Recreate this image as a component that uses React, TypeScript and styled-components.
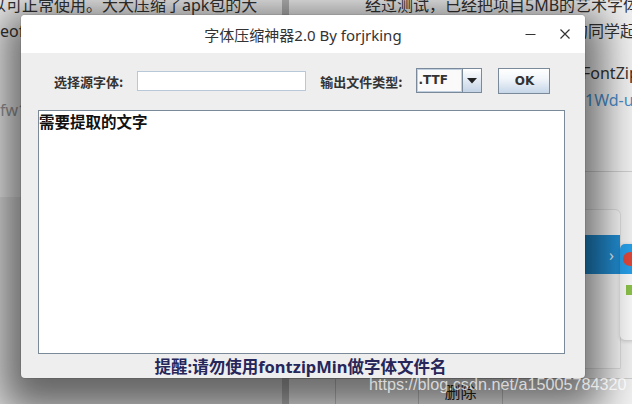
import React from "react";
import styled, { createGlobalStyle } from "styled-components";

const Global = createGlobalStyle`
  html, body { margin: 0; padding: 0; }
  body { width: 632px; height: 404px; overflow: hidden; background: #ececec; }
  * { box-sizing: border-box; }
`;

const CJK = `"Noto Sans", "Noto Sans CJK SC", sans-serif`;

const Page = styled.div`
  position: relative;
  width: 632px;
  height: 404px;
  overflow: hidden;
  background: #efefef;
  font-family: ${CJK};
`;

const Columns = styled.div`
  display: grid;
  grid-template-columns: 282px 7px 1fr;
  height: 404px;
`;

const LeftCol = styled.div`
  display: flex;
  flex-direction: column;
  background: #f1f1f1;
`;

const PageLine = styled.div<{ $pad?: number; $h?: number; $lh?: number; $color?: string }>`
  height: ${(p) => p.$h ?? 26}px;
  line-height: ${(p) => p.$lh ?? p.$h ?? 26}px;
  padding-left: ${(p) => p.$pad ?? 0}px;
  font-size: 16px;
  color: ${(p) => p.$color ?? "#333"};
  white-space: nowrap;
  overflow: hidden;
`;

const TopLine = styled(PageLine)<{ $indent?: number }>`
  margin-top: -8px;
  text-indent: ${(p) => p.$indent ?? 0}px;
`;

const LowerSection = styled.div`
  margin-top: auto;
  height: 207px;
  background: #e2e2e2;
`;

const Divider = styled.div`
  background: #b8b8b8;
`;

const RightCol = styled.div`
  display: flex;
  flex-direction: column;
  background: #f3f3f3;
`;

const Rule = styled.div`
  margin-top: 57px;
  height: 1px;
  background: #d0d0d0;
`;

const Card = styled.div`
  position: relative;
  margin: 37px 0 0 130px;
  width: 202px;
  height: 160px;
  background: #fafafa;
  border-radius: 0 6px 0 0;
  border: 1px solid #e0e0e0;
`;

const BlueBar = styled.div`
  margin-top: 25px;
  height: 39px;
  background: linear-gradient(90deg, #1d7ab8, #2290d6);
  display: flex;
  align-items: center;
  justify-content: flex-end;
  padding-right: 6px;
  color: #e8f2fb;
  font-size: 16px;
`;

const Popup = styled.div`
  position: absolute;
  left: 100%;
  top: 34px;
  width: 40px;
  height: 96px;
  background: #fbfbfb;
  border-radius: 5px 0 0 5px;
  box-shadow: 0 1px 4px rgba(0, 0, 0, 0.2);
  overflow: hidden;
`;

const PopupHead = styled.div`
  height: 30px;
  background: #27a0ea;
  display: flex;
  align-items: center;
  padding-left: 3px;
`;

const RedDot = styled.div`
  width: 14px;
  height: 14px;
  border-radius: 50%;
  background: #e0483a;
`;

const GreenMark = styled.div`
  margin: 11px 0 0 6px;
  width: 10px;
  height: 10px;
  background: #8bc34a;
`;

const TableRow = styled.div`
  margin-top: auto;
  height: 26px;
  display: flex;
  border-top: 1px solid #cfcfcf;
`;

const Cell = styled.div<{ $w: number }>`
  width: ${(p) => p.$w}px;
  border-right: 1px solid #c8c8c8;
  font-size: 16px;
  line-height: 26px;
  color: #222;
  text-align: center;
`;

const Dialog = styled.div`
  position: absolute;
  left: 21px;
  top: 15px;
  width: 564px;
  height: 363px;
  background: #eeeeee;
  border-radius: 4px;
  display: flex;
  flex-direction: column;
  box-shadow: 0 14px 40px 18px rgba(0, 0, 0, 0.56), 0 0 0 1px rgba(0, 0, 0, 0.08);
  overflow: hidden;
`;

const TitleBar = styled.div`
  height: 40px;
  background: #ffffff;
  display: grid;
  grid-template-columns: 1fr auto 1fr;
  align-items: center;
`;

const Title = styled.div`
  grid-column: 2;
  font-size: 15px;
  color: #333;
  white-space: nowrap;
`;

const WinButtons = styled.div`
  grid-column: 3;
  justify-self: end;
  display: flex;
  align-items: center;
  gap: 24px;
  padding-right: 15px;
`;

const Body = styled.div`
  flex: 1;
  display: flex;
  flex-direction: column;
  padding: 15px 20px 0 17px;
`;

const FormRow = styled.div`
  display: flex;
  align-items: center;
  height: 26px;
  padding-left: 16px;
  gap: 14px;
`;

const Label = styled.span`
  font-family: "Noto Sans CJK SC", sans-serif;
  font-size: 13px;
  font-weight: 700;
  color: #333;
  white-space: nowrap;
`;

const TextInput = styled.div`
  width: 169px;
  height: 20px;
  background: #fff;
  border: 1px solid #b8c8d8;
`;

const Combo = styled.div`
  width: 66px;
  height: 25px;
  display: flex;
  border: 1px solid #7a8a9a;
  margin-top: -1px;
`;

const ComboText = styled.div`
  flex: 1;
  background: #fafafa;
  border: 1px solid #c0d0e0;
  font-family: "DejaVu Sans", sans-serif;
  font-weight: 700;
  font-size: 12px;
  line-height: 21px;
  color: #333;
`;

const ComboArrow = styled.div`
  width: 19px;
  border-left: 1px solid #7a8a9a;
  background: linear-gradient(#ffffff, #c4d4e6);
  display: flex;
  align-items: center;
  justify-content: center;
`;

const OkButton = styled.div`
  margin-left: 2px;
  width: 52px;
  height: 26px;
  border: 1px solid #7a8a9a;
  background: linear-gradient(#ffffff 0%, #f2f6fa 40%, #c6d6e8 100%);
  display: flex;
  align-items: center;
  justify-content: center;
  font-family: "DejaVu Sans", sans-serif;
  font-weight: 700;
  font-size: 12px;
  color: #333;
`;

const TextArea = styled.div`
  margin-top: 16px;
  height: 244px;
  background: #fff;
  border: 1px solid #7a8a99;
  padding: 1px 0 0 0;
  font-family: "Noto Sans CJK SC", sans-serif;
  font-size: 15.5px;
  font-weight: 700;
  line-height: 18px;
  color: #111;
`;

const Hint = styled.div`
  flex: 1;
  display: flex;
  align-items: center;
  justify-content: center;
  font-size: 16.5px;
  font-weight: 700;
  color: #26265a;
  padding-right: 2px;
  white-space: nowrap;
`;

const Watermark = styled.div`
  position: absolute;
  left: 369px;
  top: 375px;
  font-family: "Liberation Sans", Arial, sans-serif;
  font-size: 16.2px;
  color: rgba(255, 255, 255, 0.72);
  white-space: nowrap;
`;

function MinIcon() {
  return (
    <svg width="11" height="10" viewBox="0 0 11 10">
      <path d="M0.5 5.5 H10.5" stroke="#333" strokeWidth="1.2" />
    </svg>
  );
}

function CloseIcon() {
  return (
    <svg width="10" height="10" viewBox="0 0 10 10">
      <path d="M0.5 0.5 L9.5 9.5 M9.5 0.5 L0.5 9.5" stroke="#333" strokeWidth="1.2" />
    </svg>
  );
}

function Arrow() {
  return (
    <svg width="10" height="6" viewBox="0 0 10 6">
      <path d="M0 0 H10 L5 5.5 Z" fill="#222" />
    </svg>
  );
}

export default function App() {
  return (
    <Page>
      <Global />
      <Columns>
        <LeftCol>
          <TopLine $indent={-10}>以可正常使用。大大压缩了apk包的大</TopLine>
          <PageLine $h={26}>eof</PageLine>
          <PageLine $h={90} $lh={132} $color="#9a9a9a">
            fw1
          </PageLine>
          <LowerSection />
        </LeftCol>
        <Divider />
        <RightCol>
          <TopLine $pad={76}>经过测试，已经把项目5MB的艺术字体</TopLine>
          <PageLine $pad={235} $h={26}>有需要的同学起</PageLine>
          <PageLine $pad={277} $h={42} $lh={58}>或FontZip</PageLine>
          <PageLine $pad={296} $h={28} $color="#4a8fce">1Wd-u</PageLine>
          <Rule />
          <Card>
            <BlueBar>›</BlueBar>
            <Popup>
              <PopupHead>
                <RedDot />
              </PopupHead>
              <GreenMark />
            </Popup>
          </Card>
          <TableRow>
            <Cell $w={47} />
            <Cell $w={83} />
            <Cell $w={84}>删除</Cell>
          </TableRow>
        </RightCol>
      </Columns>

      <Dialog>
        <TitleBar>
          <Title>字体压缩神器2.0 By forjrking</Title>
          <WinButtons>
            <MinIcon />
            <CloseIcon />
          </WinButtons>
        </TitleBar>
        <Body>
          <FormRow>
            <Label>选择源字体:</Label>
            <TextInput />
            <Label>输出文件类型:</Label>
            <Combo>
              <ComboText>.TTF</ComboText>
              <ComboArrow>
                <Arrow />
              </ComboArrow>
            </Combo>
            <OkButton>OK</OkButton>
          </FormRow>
          <TextArea>需要提取的文字</TextArea>
          <Hint>提醒:请勿使用fontzipMin做字体文件名</Hint>
        </Body>
      </Dialog>
      <Watermark>https://blog.csdn.net/a15005784320</Watermark>
    </Page>
  );
}
